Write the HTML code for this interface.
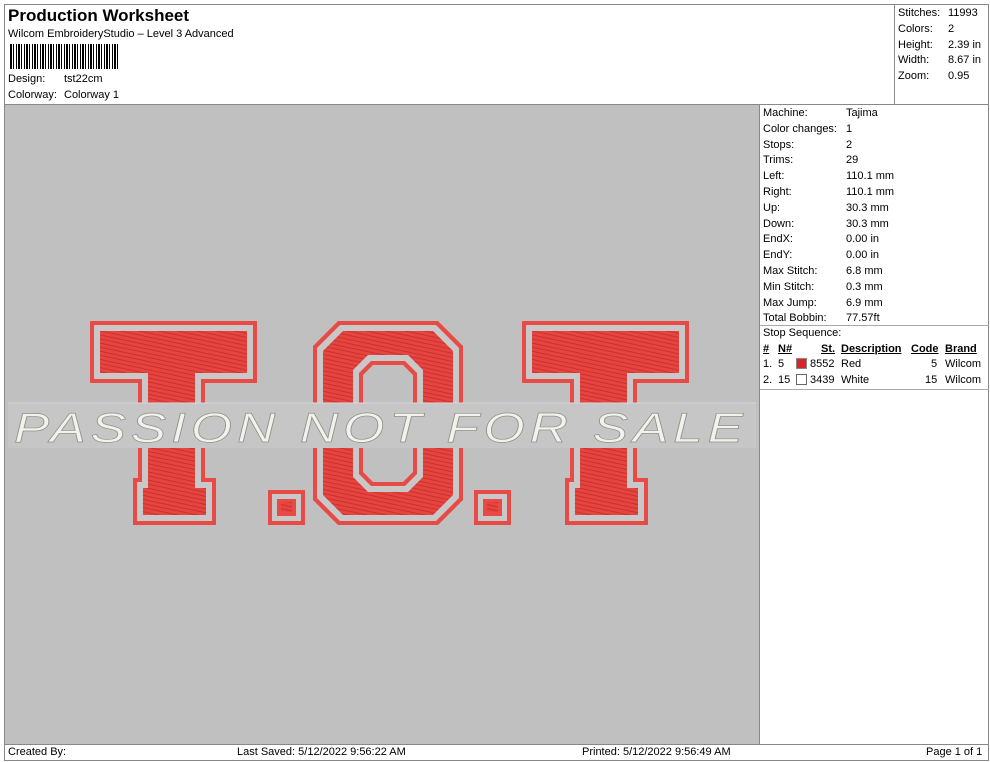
<!DOCTYPE html>
<html><head><style>
*{margin:0;padding:0;box-sizing:border-box}
body{width:990px;height:762px;background:#fff;font-family:"Liberation Sans",sans-serif;font-size:11px;color:#000;position:relative;overflow:hidden}
.a{position:absolute}
.t{position:absolute;white-space:nowrap;font-size:11px}
</style></head><body>
<div class="a" style="left:4px;top:4px;width:985px;height:757px;border:1px solid #888"></div>
<div class="a" style="left:4px;top:104px;width:985px;height:1px;background:#888"></div>
<div class="a" style="left:894px;top:4px;width:1px;height:100px;background:#888"></div>
<div class="t" style="left:8px;top:6px;font-size:17px;font-weight:bold">Production Worksheet</div>
<div class="t" style="left:8px;top:28px">Wilcom EmbroideryStudio – Level 3 Advanced</div>
<div class="a" style="left:10px;top:44px;width:110px;height:25px;background:repeating-linear-gradient(90deg,#000 0 2px,#fff 2px 3px,#000 3px 4px,#fff 4px 6px,#000 6px 7px,#fff 7px 8px)"></div>
<div class="t" style="left:8px;top:73px">Design:</div><div class="t" style="left:64px;top:73px">tst22cm</div>
<div class="t" style="left:8px;top:89px">Colorway:</div><div class="t" style="left:64px;top:89px">Colorway 1</div>
<div class="t" style="left:898px;top:6px;line-height:15.8px">Stitches:<br>Colors:<br>Height:<br>Width:<br>Zoom:</div>
<div class="t" style="left:948px;top:6px;line-height:15.8px">11993<br>2<br>2.39 in<br>8.67 in<br>0.95</div>
<div class="a" style="left:5px;top:105px;width:754px;height:639px;background:#c0c0c0"></div>
<div class="a" style="left:759px;top:105px;width:1px;height:639px;background:#888"></div>
<svg class="a" style="left:0;top:0" width="760" height="744" viewBox="0 0 760 744">
<defs>
<pattern id="st" width="6" height="4" patternUnits="userSpaceOnUse" patternTransform="rotate(12)"><rect width="6" height="4" fill="#e8443f"/><rect y="3" width="6" height="1" fill="#c63430"/></pattern>
<g id="T">
<path d="M0 0H167V62H115V157H126V204H43V157H48V62H0Z" fill="#e84a45"/>
<path d="M4 4H163V58H111V161H122V200H47V161H52V58H4Z" fill="#c8c8c8"/>
<path d="M10 10H157V52H105V167H116V194H53V167H58V52H10Z" fill="url(#st)"/>
</g>
<g id="D">
<rect width="37" height="35" fill="#e84a45"/><rect x="4" y="4" width="29" height="27" fill="#c8c8c8"/><rect x="9" y="9" width="19" height="17" fill="#e84a45"/><rect x="13" y="12" width="11" height="10" fill="url(#st)"/>
</g>
</defs>
<use href="#T" x="90" y="321"/>
<use href="#T" x="522" y="321"/>
<use href="#D" x="268" y="490"/>
<use href="#D" x="474" y="490"/>
<g>
<path d="M338 321H438L463 346V500L438 525H338L313 500V346Z M373 365H403L413 375V472L403 482H373L363 472V375Z" fill="#e84a45" fill-rule="evenodd"/>
<path d="M340 325H436L459 348V498L436 521H340L317 498V348Z M371 361H405L417 373V474L405 486H371L359 474V373Z" fill="#c8c8c8" fill-rule="evenodd"/>
<path d="M343 331H433L453 351V495L433 515H343L323 495V351Z M368 355H408L423 370V477L408 492H368L353 477V370Z" fill="url(#st)" fill-rule="evenodd"/>
</g>
<rect x="8" y="403" width="748" height="45" fill="#c6c6c6"/>
<line x1="8" y1="403" x2="756" y2="403" stroke="#d8d8d8"/>
<text x="14" y="442" font-family="Liberation Sans,sans-serif" font-style="italic" font-size="42" fill="#f2f2ec" stroke="#909088" stroke-width="0.7" letter-spacing="4" textLength="734" lengthAdjust="spacingAndGlyphs">PASSION NOT FOR SALE</text>
</svg>
<div class="t" style="left:763px;top:106px;line-height:15.8px">Machine:<br>Color changes:<br>Stops:<br>Trims:<br>Left:<br>Right:<br>Up:<br>Down:<br>EndX:<br>EndY:<br>Max Stitch:<br>Min Stitch:<br>Max Jump:<br>Total Bobbin:</div>
<div class="t" style="left:846px;top:106px;line-height:15.8px">Tajima<br>1<br>2<br>29<br>110.1 mm<br>110.1 mm<br>30.3 mm<br>30.3 mm<br>0.00 in<br>0.00 in<br>6.8 mm<br>0.3 mm<br>6.9 mm<br>77.57ft</div>
<div class="a" style="left:760px;top:325px;width:229px;height:1px;background:#aaa"></div>
<div class="t" style="left:763px;top:327px">Stop Sequence:</div>
<div class="t" style="left:763px;top:343px;font-weight:bold;text-decoration:underline">#</div>
<div class="t" style="left:778px;top:343px;font-weight:bold;text-decoration:underline">N#</div>
<div class="t" style="left:821px;top:343px;font-weight:bold;text-decoration:underline">St.</div>
<div class="t" style="left:841px;top:343px;font-weight:bold;text-decoration:underline">Description</div>
<div class="t" style="left:911px;top:343px;font-weight:bold;text-decoration:underline">Code</div>
<div class="t" style="left:945px;top:343px;font-weight:bold;text-decoration:underline">Brand</div>
<div class="t" style="left:763px;top:358px">1.</div><div class="t" style="left:778px;top:358px">5</div>
<div class="a" style="left:796px;top:358px;width:11px;height:11px;background:#d9262b;border:1px solid #888"></div>
<div class="t" style="left:810px;top:358px">8552</div><div class="t" style="left:841px;top:358px">Red</div>
<div class="t" style="left:931px;top:358px">5</div><div class="t" style="left:945px;top:358px">Wilcom</div>
<div class="t" style="left:763px;top:374px">2.</div><div class="t" style="left:778px;top:374px">15</div>
<div class="a" style="left:796px;top:374px;width:11px;height:11px;background:#fff;border:1px solid #666"></div>
<div class="t" style="left:810px;top:374px">3439</div><div class="t" style="left:841px;top:374px">White</div>
<div class="t" style="left:925px;top:374px">15</div><div class="t" style="left:945px;top:374px">Wilcom</div>
<div class="a" style="left:760px;top:389px;width:229px;height:1px;background:#aaa"></div>
<div class="a" style="left:4px;top:744px;width:985px;height:1px;background:#888"></div>
<div class="t" style="left:8px;top:746px">Created By:</div>
<div class="t" style="left:237px;top:746px">Last Saved: 5/12/2022 9:56:22 AM</div>
<div class="t" style="left:582px;top:746px">Printed: 5/12/2022 9:56:49 AM</div>
<div class="t" style="left:926px;top:746px">Page 1 of 1</div>
</body></html>
